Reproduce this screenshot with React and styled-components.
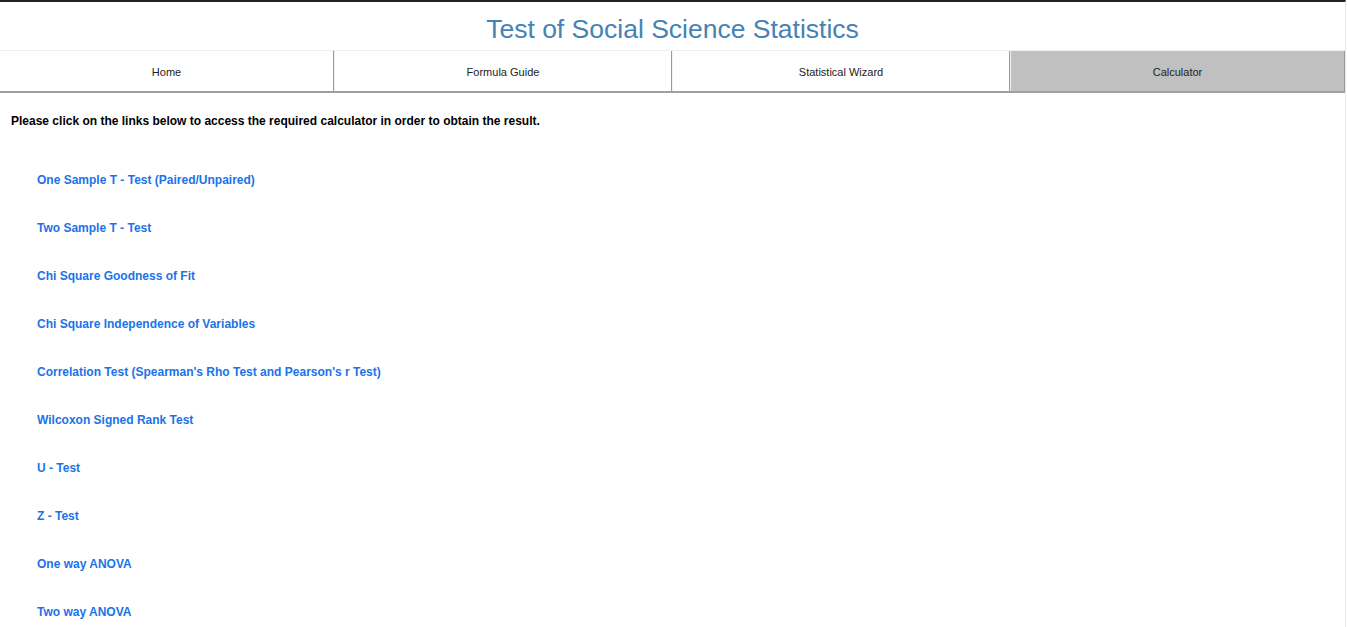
import React from "react";
import styled, { createGlobalStyle } from "styled-components";

const Global = createGlobalStyle`
  html, body { margin: 0; padding: 0; background: #fff; }
  body { font-family: "Liberation Sans", Arial, sans-serif; }
`;

const Page = styled.div`
  width: 1346px;
  min-height: 627px;
  box-sizing: border-box;
  border-top: 2px solid #222;
  border-right: 1px solid #e8e8e8;
`;

const Title = styled.h1`
  margin: 0;
  height: 48px;
  display: flex;
  align-items: center;
  justify-content: center;
  font-size: 26.5px;
  font-weight: normal;
  color: #4682b4;
  padding-top: 6px;
  box-sizing: border-box;
`;

const Nav = styled.nav`
  display: grid;
  grid-template-columns: 334px 338px 338px 1fr;
  border-top: 1px solid #eee;
  border-bottom: 2px solid #a0a0a0;
  height: 43px;
  box-sizing: border-box;
`;

const Tab = styled.div`
  display: flex;
  align-items: center;
  justify-content: center;
  padding-top: 2px;
  font-size: 11px;
  color: #222;
  background: ${(p) => (p.$active ? "#c0c0c0" : "#fff")};
  border-right: 1px solid #999;
  border-left: 1px solid #f0f0f0;
  &:first-child { border-left: none; }
`;

const Intro = styled.p`
  margin: 21px 0 0 11px;
  font-size: 12px;
  font-weight: bold;
  color: #000;
`;

const List = styled.ul`
  list-style: none;
  margin: 45px 0 0 0;
  padding: 0 0 0 37px;
  display: flex;
  flex-direction: column;
  gap: 34px;
`;

const Link = styled.a`
  font-size: 12px;
  font-weight: bold;
  color: #1a73e8;
  text-decoration: none;
  line-height: 14px;
  display: block;
`;

const tabs = ["Home", "Formula Guide", "Statistical Wizard", "Calculator"];
const links = [
  "One Sample T - Test (Paired/Unpaired)",
  "Two Sample T - Test",
  "Chi Square Goodness of Fit",
  "Chi Square Independence of Variables",
  "Correlation Test (Spearman's Rho Test and Pearson's r Test)",
  "Wilcoxon Signed Rank Test",
  "U - Test",
  "Z - Test",
  "One way ANOVA",
  "Two way ANOVA",
];

export default function App() {
  return (
    <>
      <Global />
      <Page>
        <Title>Test of Social Science Statistics</Title>
        <Nav>
          {tabs.map((t) => (
            <Tab key={t} $active={t === "Calculator"}>{t}</Tab>
          ))}
        </Nav>
        <Intro>Please click on the links below to access the required calculator in order to obtain the result.</Intro>
        <List>
          {links.map((l) => (
            <li key={l}><Link href="#">{l}</Link></li>
          ))}
        </List>
      </Page>
    </>
  );
}
